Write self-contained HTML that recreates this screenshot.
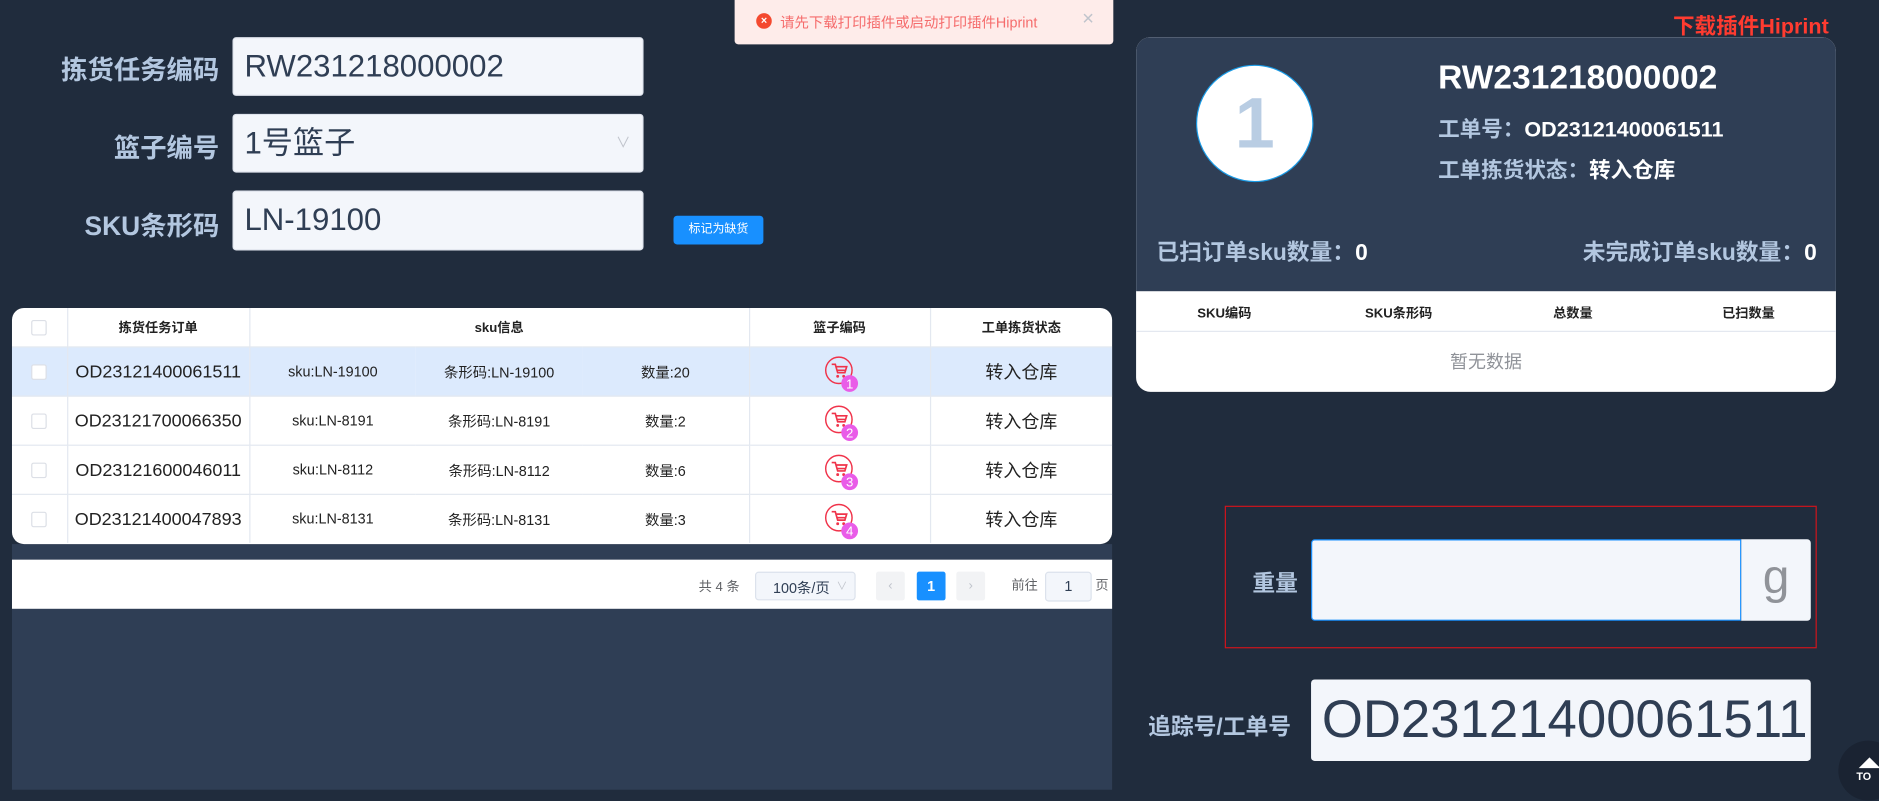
<!DOCTYPE html>
<html><head><meta charset="utf-8"><style>
html,body{margin:0;padding:0;width:1879px;height:789px;overflow:hidden;background:#202c3d;}
#w{position:absolute;left:0;top:0;width:1568px;height:659px;transform:scale(1.1984);transform-origin:0 0;font-family:"Liberation Sans","Noto Sans CJK SC",sans-serif;}
.a{position:absolute;}
.lab{color:#b3c7e0;font-weight:bold;font-size:22px;text-align:right;width:183px;left:0;}
.inp{background:#f3f6fb;border:1px solid #dfe4ed;border-radius:3px;color:#2f3e54;font-size:26px;box-sizing:border-box;padding-left:9px;line-height:46px;}
table{border-collapse:collapse;table-layout:fixed;}
.tb td{border-right:1px solid #e3e8f0;border-bottom:1px solid #e3e8f0;text-align:center;font-size:12px;color:#222;height:40px;padding:0;vertical-align:middle;}
.tb tr.h td{height:32px;font-weight:bold;font-size:11px;}
.ck{display:inline-block;width:11px;height:11px;border:1px solid #dcdfe6;border-radius:2px;background:#fff;vertical-align:middle;}
.tb td.ord{font-size:15px;}
.tb td.st{font-size:15px;}
.lbl2{color:#b3c7e0;}
</style></head><body><div id="w">
<div class="a lab" style="top:41px;">拣货任务编码</div>
<div class="a inp" style="left:194px;top:31px;width:343px;height:49px;">RW231218000002</div>
<div class="a lab" style="top:106px;">篮子编号</div>
<div class="a inp" style="left:194px;top:95px;width:343px;height:49px;">1号篮子<span style="position:absolute;right:10px;top:0;font-size:12px;color:#c0c4cc;">&#8744;</span></div>
<div class="a lab" style="top:171px;">SKU条形码</div>
<div class="a inp" style="left:194px;top:159px;width:343px;height:50px;">LN-19100</div>
<div class="a" style="left:562px;top:180px;width:75px;height:24px;background:#1890ff;border-radius:3px;color:#fff;font-size:10px;text-align:center;line-height:24px;">标记为缺货</div>

<div class="a" style="left:613px;top:-3px;width:316px;height:40px;background:#feecea;border-radius:3px;">
<div class="a" style="left:18px;top:14px;width:13px;height:13px;border-radius:50%;background:#f4492f;color:#fff;font-size:9px;line-height:13px;text-align:center;font-weight:bold;">×</div>
<div class="a" style="left:38px;top:13px;font-size:12px;color:#f56c6c;">请先下载打印插件或启动打印插件Hiprint</div>
<div class="a" style="left:290px;top:9px;font-size:17px;color:#c0c4cc;">×</div>
</div>

<div class="a" style="left:10px;top:454px;width:918px;height:205px;background:#2f3e55;"></div>
<div class="a" style="left:10px;top:257px;width:918px;height:197px;background:#fff;border-radius:10px;overflow:hidden;">
<table class="tb" style="width:918px;">
<colgroup><col style="width:46px"><col style="width:152px"><col style="width:139px"><col style="width:139px"><col style="width:139px"><col style="width:151px"><col style="width:152px"></colgroup>
<tr class="h"><td><span class="ck"></span></td><td>拣货任务订单</td><td colspan="3">sku信息</td><td>篮子编码</td><td style="border-right:0">工单拣货状态</td></tr>
<tr style="background:#dceafd"><td><span class="ck"></span></td><td class="ord">OD23121400061511</td><td style="border-right:0">sku:LN-19100</td><td style="border-right:0">条形码:LN-19100</td><td>数量:20</td><td></td><td class="st" style="border-right:0">转入仓库</td></tr>
<tr><td><span class="ck"></span></td><td class="ord">OD23121700066350</td><td style="border-right:0">sku:LN-8191</td><td style="border-right:0">条形码:LN-8191</td><td>数量:2</td><td></td><td class="st" style="border-right:0">转入仓库</td></tr>
<tr><td><span class="ck"></span></td><td class="ord">OD23121600046011</td><td style="border-right:0">sku:LN-8112</td><td style="border-right:0">条形码:LN-8112</td><td>数量:6</td><td></td><td class="st" style="border-right:0">转入仓库</td></tr>
<tr><td style="border-bottom:0"><span class="ck"></span></td><td class="ord" style="border-bottom:0">OD23121400047893</td><td style="border-right:0;border-bottom:0">sku:LN-8131</td><td style="border-right:0;border-bottom:0">条形码:LN-8131</td><td style="border-bottom:0">数量:3</td><td style="border-bottom:0"></td><td class="st" style="border-right:0;border-bottom:0">转入仓库</td></tr>
</table>
</div>
<svg class="a" style="left:0;top:0" width="930" height="460">
<defs><g id="c"><circle cx="0" cy="0" r="11" fill="none" stroke="#f0334a" stroke-width="1.2"/><path d="M-6,-5 h3 l2,7 h6 l1.5,-5 h-9 M-1,0 h6" fill="none" stroke="#f0334a" stroke-width="1.4"/><circle cx="-1" cy="5" r="1.2" fill="#f0334a"/><circle cx="4" cy="5" r="1.2" fill="#f0334a"/></g></defs>
<g font-family="Liberation Sans" font-size="11" fill="#fff" text-anchor="middle">
<use href="#c" x="700" y="309"/><circle cx="709" cy="320" r="7" fill="#e95ce8"/><text x="709" y="324">1</text>
<use href="#c" x="700" y="350"/><circle cx="709" cy="361" r="7" fill="#e95ce8"/><text x="709" y="365">2</text>
<use href="#c" x="700" y="391"/><circle cx="709" cy="402" r="7" fill="#e95ce8"/><text x="709" y="406">3</text>
<use href="#c" x="700" y="432"/><circle cx="709" cy="443" r="7" fill="#e95ce8"/><text x="709" y="447">4</text>
</g></svg>
<div class="a" style="left:10px;top:467px;width:918px;height:41px;background:#fff;font-size:11px;color:#606266;">
<div class="a" style="left:573px;top:14px;">共 4 条</div>
<div class="a" style="left:620px;top:10px;width:82px;height:22px;border:1px solid #dce2ec;border-radius:3px;background:#f3f6fb;"><span class="a" style="left:14px;top:4px;color:#2f3e54;font-size:12px;">100条/页</span><span class="a" style="right:6px;top:4px;color:#c0c4cc;font-size:9px;">&#8744;</span></div>
<div class="a" style="left:721px;top:10px;width:24px;height:24px;background:#f2f3f5;border-radius:2px;color:#c0c4cc;text-align:center;line-height:24px;">&lsaquo;</div>
<div class="a" style="left:755px;top:10px;width:24px;height:24px;background:#1890ff;border-radius:2px;color:#fff;text-align:center;line-height:24px;font-weight:bold;font-size:12px;">1</div>
<div class="a" style="left:788px;top:10px;width:24px;height:24px;background:#f2f3f5;border-radius:2px;color:#c0c4cc;text-align:center;line-height:24px;">&rsaquo;</div>
<div class="a" style="left:834px;top:13px;">前往</div>
<div class="a" style="left:862px;top:10px;width:37px;height:23px;border:1px solid #dce2ec;border-radius:3px;background:#f3f6fb;text-align:center;line-height:23px;color:#2f3e54;font-size:12px;">1</div>
<div class="a" style="left:904px;top:13px;">页</div>
</div>

<div class="a" style="left:1396px;top:8px;color:#ff3b30;font-weight:bold;font-size:18px;">下载插件Hiprint</div>
<div class="a" style="left:948px;top:31px;width:584px;height:296px;background:#fff;border-radius:12px;overflow:hidden;">
<div class="a" style="left:0;top:0;width:584px;height:212px;background:#2f3e55;"></div>
<div class="a" style="left:50px;top:23px;width:96px;height:96px;border-radius:50%;background:#fff;border:1.5px solid #1a9be6;text-align:center;line-height:96px;font-size:60px;font-weight:bold;color:#b9cde3;">1</div>
<div class="a" style="left:252px;top:18px;color:#fff;font-weight:bold;font-size:28px;">RW231218000002</div>
<div class="a" style="left:252px;top:63px;font-weight:bold;font-size:18px;color:#fff;"><span class="lbl2">工单号：</span>OD23121400061511</div>
<div class="a" style="left:252px;top:97px;font-weight:bold;font-size:18px;color:#fff;"><span class="lbl2">工单拣货状态：</span>转入仓库</div>
<div class="a" style="left:17px;top:165px;font-weight:bold;font-size:19px;color:#fff;"><span class="lbl2">已扫订单sku数量：</span>0</div>
<div class="a" style="right:16px;top:165px;font-weight:bold;font-size:19px;color:#fff;"><span class="lbl2">未完成订单sku数量：</span>0</div>
<div class="a" style="left:0;top:212px;width:584px;height:33px;border-bottom:1px solid #e3e8f0;font-size:11px;font-weight:bold;color:#222;">
<span class="a" style="left:51px;top:10px;">SKU编码</span><span class="a" style="left:191px;top:10px;">SKU条形码</span><span class="a" style="left:348px;top:10px;">总数量</span><span class="a" style="left:489px;top:10px;">已扫数量</span></div>
<div class="a" style="left:0;top:260px;width:584px;text-align:center;font-size:15px;color:#909399;">暂无数据</div>
</div>

<div class="a" style="left:1022px;top:422px;width:494px;height:119px;border:1.5px solid #d0141c;box-sizing:border-box;"></div>
<div class="a" style="left:1045px;top:472px;font-weight:bold;font-size:19px;color:#b3c7e0;">重量</div>
<div class="a" style="left:1094px;top:450px;width:359px;height:68px;background:#f3f6fb;border:1px solid #1890ff;border-radius:3px 0 0 3px;box-sizing:border-box;"></div>
<div class="a" style="left:1453px;top:450px;width:58px;height:68px;background:#f3f6fb;border-radius:0 3px 3px 0;color:#909399;font-size:40px;text-align:center;line-height:64px;">g</div>
<div class="a" style="left:958px;top:592px;font-weight:bold;font-size:19px;color:#b3c7e0;">追踪号/工单号</div>
<div class="a" style="left:1094px;top:567px;width:417px;height:68px;background:#f3f6fb;border-radius:3px;color:#2f3e54;font-size:44px;line-height:68px;padding-left:9px;box-sizing:border-box;white-space:nowrap;overflow:hidden;">OD23121400061511</div>
<div class="a" style="left:1534px;top:618px;width:50px;height:50px;border-radius:50%;background:#1a2332;"></div>
<div class="a" style="left:1551px;top:632px;width:0;height:0;border-left:9px solid transparent;border-right:9px solid transparent;border-bottom:9px solid #fff;"></div>
<div class="a" style="left:1549px;top:643px;color:#fff;font-size:9px;font-weight:bold;">TO</div>
</div></body></html>
